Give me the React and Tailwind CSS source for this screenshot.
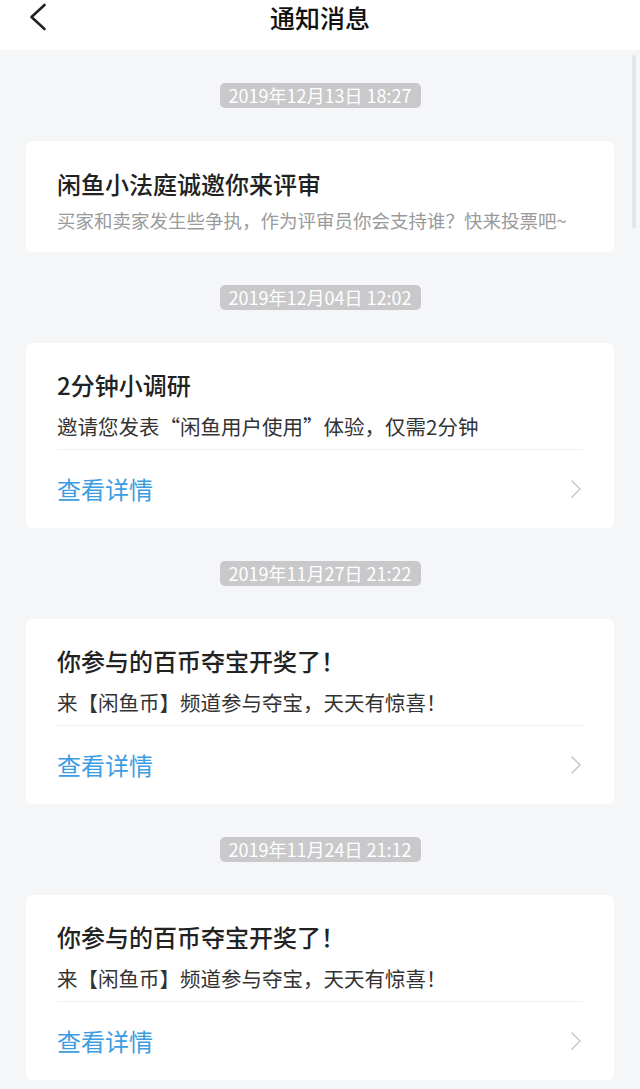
const FONT = "font-['Noto_Sans_CJK_SC','Noto_Sans',sans-serif]";

const NOTICES = [
  {
    date: "2019年12月13日 18:27",
    title: "闲鱼小法庭诚邀你来评审",
    desc: "买家和卖家发生些争执，作为评审员你会支持谁？快来投票吧~",
    simple: true,
  },
  {
    date: "2019年12月04日 12:02",
    title: "2分钟小调研",
    desc: "邀请您发表“闲鱼用户使用”体验，仅需2分钟",
  },
  {
    date: "2019年11月27日 21:22",
    title: "你参与的百币夺宝开奖了！",
    desc: "来【闲鱼币】频道参与夺宝，天天有惊喜！",
  },
  {
    date: "2019年11月24日 21:12",
    title: "你参与的百币夺宝开奖了！",
    desc: "来【闲鱼币】频道参与夺宝，天天有惊喜！",
  },
];

function DatePill({ children }) {
  return (
    <div className="w-[201px] h-[25px] rounded-[5px] bg-[#c9c9cb] text-white text-[18px] leading-[25px] text-center">
      {children}
    </div>
  );
}

function NoticeCard({ n }) {
  if (n.simple) {
    return (
      <div className="w-full bg-white rounded-[6px] px-[31px] pt-[27px] pb-[19px]">
        <p className="text-[24px] leading-[32px] font-medium text-[#222]">{n.title}</p>
        <p className="mt-[7px] text-[18.5px] leading-[26px] text-[#9a9a9a] whitespace-nowrap">{n.desc}</p>
      </div>
    );
  }
  return (
    <div className="w-full bg-white rounded-[6px] px-[31px] pt-[26px]">
      <p className="text-[24px] leading-[32px] font-medium text-[#222]">{n.title}</p>
      <p className="mt-[11px] text-[20.5px] leading-[28px] text-[#333]">{n.desc}</p>
      <div className="mt-[9px] h-px bg-[#f0f0f0]" />
      <div className="h-[78px] flex items-center justify-between">
        <span className="text-[24px] text-[#3d9de2]">查看详情</span>
        <svg width="10" height="18" viewBox="0 0 10 18" className="mr-[2px]">
          <polyline points="1,1 9,9 1,17" fill="none" stroke="#c6c6c6" strokeWidth="1.5" strokeLinecap="round" strokeLinejoin="round" />
        </svg>
      </div>
    </div>
  );
}

export default function App() {
  return (
    <div className={`${FONT} w-[640px] h-[1089px] overflow-hidden bg-[#f5f6f8] relative`}>
      {/* Header */}
      <div className="h-[50px] bg-white relative flex justify-center">
        <svg width="18" height="28" viewBox="0 0 18 28" className="absolute left-[29px] top-[3px]">
          <polyline points="15.5,2 2.5,14 15.5,26" fill="none" stroke="#222" strokeWidth="2.6" strokeLinecap="round" strokeLinejoin="round" />
        </svg>
        <h1 className="text-[25px] leading-[34px] font-medium text-[#111]">通知消息</h1>
      </div>

      {/* List */}
      <div className="px-[26px] pt-[33px] flex flex-col items-center gap-[33px]">
        {NOTICES.map((n, i) => (
          <div key={i} className="w-full flex flex-col items-center gap-[33px]">
            <DatePill>{n.date}</DatePill>
            <NoticeCard n={n} />
          </div>
        ))}
      </div>

      {/* Scrollbar */}
      <div className="absolute right-[4px] top-[55px] w-[4px] h-[174px] rounded-full bg-[#e4e5e7]" />
    </div>
  );
}
